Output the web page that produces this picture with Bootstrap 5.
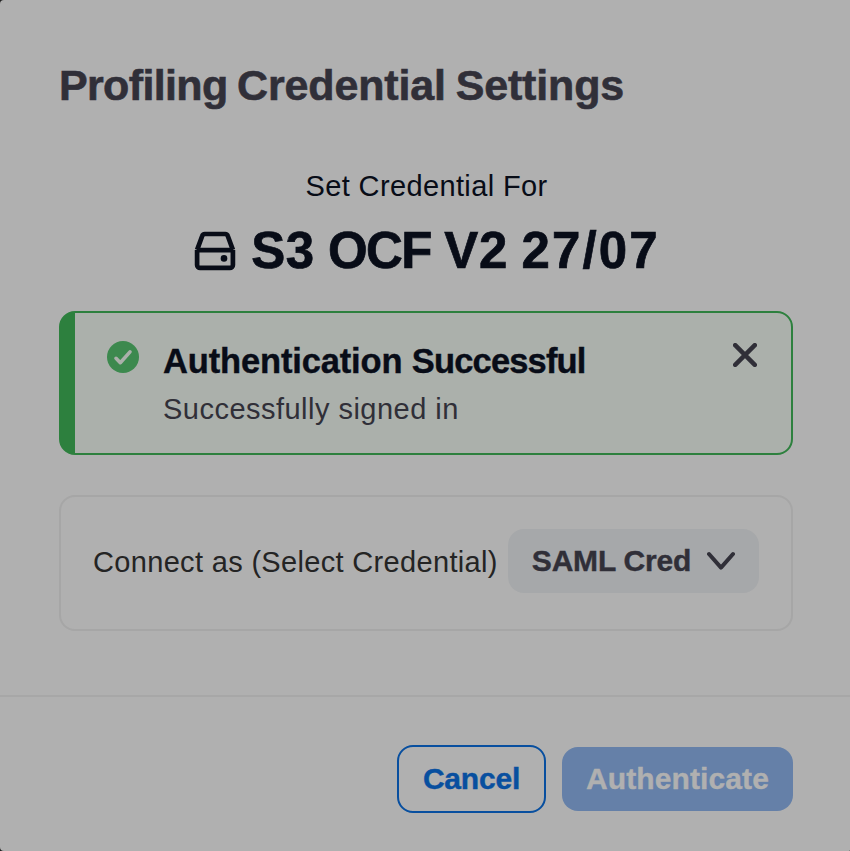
<!DOCTYPE html>
<html lang="en">
<head>
<meta charset="utf-8">
<meta name="viewport" content="width=device-width, initial-scale=1">
<title>Profiling Credential Settings</title>
<link href="https://cdn.jsdelivr.net/npm/bootstrap@5.3.0/dist/css/bootstrap.min.css" rel="stylesheet">
<style>
body{background:#202020;font-family:"Liberation Sans",Arial,sans-serif;font-size:29px;line-height:40px;color:#080c17;overflow:hidden}
.dialog-panel{height:851px;background:#b0b0b0;border-radius:4px 0 1px 4px}
.dialog-main{height:695px;padding:57px 57px 0 59px}
.dialog-title{font-size:43px;line-height:56px;letter-spacing:-.43px;word-spacing:-2px;color:#302f38;margin-bottom:53px;-webkit-text-stroke:.6px}
.title-first{letter-spacing:-.65px}
.title-rest{letter-spacing:-.15px}
.set-for{letter-spacing:.37px;padding-left:1px;margin-bottom:13px}
.source-name{font-size:51px;line-height:64px;margin-bottom:28px;gap:15px;-webkit-text-stroke:.7px}
.name-code{letter-spacing:.3px}
.name-format{letter-spacing:-1.6px}
.name-version{letter-spacing:.6px}
.name-date{letter-spacing:2.1px;margin-right:-2px}
.name-words{word-spacing:-.6px}
.success-box{height:144px;border:2px solid #2d803e;border-left-width:16px;border-radius:16px;background:#abb0ab;padding:26px 34px 0 32px;margin-bottom:40px}
.success-title{font-size:34.5px;line-height:44px;letter-spacing:-.15px;margin-bottom:4px;-webkit-text-stroke:.4px}
.success-word{letter-spacing:-.85px}
.success-note{line-height:44px;letter-spacing:.48px;color:#302f38}
.credential-box{height:136px;border:2px solid #a6a6a6;border-radius:16px;padding:0 32px 4px;color:#242424}
.credential-label{letter-spacing:.33px;margin-top:2px}
.btn{--bs-btn-font-size:30px;--bs-btn-line-height:40px;--bs-btn-border-radius:16px;--bs-btn-border-width:0;--bs-btn-font-weight:700;--bs-btn-padding-x:0;--bs-btn-padding-y:0;height:64px;white-space:nowrap;-webkit-text-stroke:.4px}
.btn-select{--bs-btn-bg:#a6a8aa;--bs-btn-color:#302f38;--bs-btn-hover-bg:#a0a2a5;width:251px;letter-spacing:-.2px;gap:16px}
.dialog-actions{border-top:2px solid #a7a7a7;height:156px;padding:48px 57px 0 0;gap:16px}
.btn-cancel{--bs-btn-border-width:2px;--bs-btn-border-color:#084f9f;--bs-btn-color:#084f9f;--bs-btn-hover-color:#063f80;--bs-btn-hover-border-color:#063f80;width:149px;height:68px;letter-spacing:-.2px}
.btn-auth{--bs-btn-disabled-bg:#6580a8;--bs-btn-disabled-color:#b0b0b0;--bs-btn-disabled-opacity:1;width:231px;margin-top:2px;letter-spacing:.1px}
svg{display:block;flex:none}
.check-icon{margin:2px 24px 0 0}
.close-btn{margin-top:4px;color:#302f38;line-height:0}
</style>
</head>
<body>
<div class="dialog-panel d-flex flex-column">
  <main class="dialog-main">
    <h1 class="dialog-title fw-bold text-nowrap"><span class="title-first">Profiling</span> <span class="title-rest">Credential Settings</span></h1>
    <div class="set-for text-center">Set Credential For</div>
    <h2 class="source-name fw-bold d-flex justify-content-center align-items-center text-nowrap">
      <svg width="42" height="40" viewBox="0 0 42 40" fill="none" stroke="#080c17" stroke-width="4.7" stroke-linejoin="round"><path d="M3.1 18.9v15a3 3 0 0 0 3 3h29.8a3 3 0 0 0 3-3v-15M3.1 19.1h35.8M3.1 18.9 8.2 5q.6-2 2.6-2h20.4q2 0 2.6 2l5.1 13.9"/><circle cx="30" cy="27.4" r="3.3" fill="#080c17" stroke="none"/></svg>
      <span class="name-words"><span class="name-code">S3</span> <span class="name-format">OCF</span> <span class="name-version">V2</span> <span class="name-date">27/07</span></span>
    </h2>
    <section class="success-box d-flex align-items-start" role="status">
      <svg class="check-icon" width="32" height="32" viewBox="0 0 32 32" fill="none"><circle cx="16" cy="16" r="16" fill="#3c894e"/><path d="M9 17.3 13.3 21.7 23 10.9" stroke="#abb0ab" stroke-width="3.6" stroke-linecap="round" stroke-linejoin="round"/></svg>
      <div class="flex-grow-1 text-nowrap">
        <div class="success-title fw-bold">Authentication <span class="success-word">Successful</span></div>
        <div class="success-note">Successfully signed in</div>
      </div>
      <button class="close-btn border-0 bg-transparent p-0" aria-label="Close"><svg width="24" height="24" viewBox="0 0 24 24" fill="none" stroke="currentColor" stroke-width="4.5" stroke-linecap="round"><path d="M2.2 2.2 21.8 21.8M21.8 2.2 2.2 21.8"/></svg></button>
    </section>
    <section class="credential-box d-flex align-items-center justify-content-between">
      <span class="credential-label text-nowrap">Connect as (Select Credential)</span>
      <button class="btn btn-select d-flex align-items-center justify-content-center"><span>SAML Cred</span><svg width="28" height="20" viewBox="0 0 28 20" fill="none" stroke="currentColor" stroke-width="4" stroke-linecap="round" stroke-linejoin="round"><path d="M2 3 14 16.6 26 3"/></svg></button>
    </section>
  </main>
  <footer class="dialog-actions d-flex justify-content-end align-items-start">
    <button class="btn btn-cancel">Cancel</button>
    <button class="btn btn-auth" disabled>Authenticate</button>
  </footer>
</div>
<script src="https://cdn.jsdelivr.net/npm/bootstrap@5.3.0/dist/js/bootstrap.bundle.min.js"></script>
</body>
</html>
